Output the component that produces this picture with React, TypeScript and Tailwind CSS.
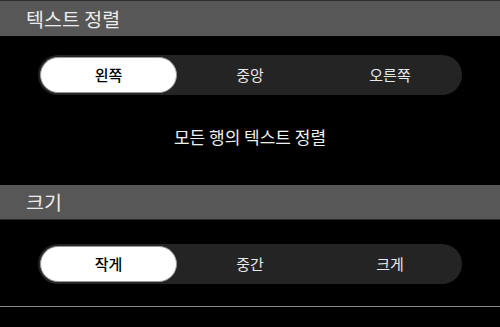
import React, { useState } from "react";

const font = { fontFamily: '"Noto Sans CJK KR", "Noto Sans", sans-serif' };

function Segmented({ options, value, onChange }: { options: string[]; value: number; onChange: (i: number) => void }) {
  return (
    <div className="mx-[38px] h-[40px] rounded-full bg-[#242424] p-[2px] flex">
      {options.map((o, i) => (
        <div key={o} className="flex-1 flex">
          <button
            onClick={() => onChange(i)}
            className={
              i === value
                ? "flex-1 mr-[3px] rounded-full bg-white text-black text-[15px] font-medium border border-[#9a9a9a] flex items-center justify-center"
                : "flex-1 rounded-full text-[#e8e8e8] text-[15px] flex items-center justify-center"
            }
          >
            {o}
          </button>
        </div>
      ))}
    </div>
  );
}

export default function App() {
  const [align, setAlign] = useState(0);
  const [size, setSize] = useState(0);
  return (
    <div className="w-[500px] h-[327px] bg-black overflow-hidden" style={font}>
      <div className="h-[36px] bg-[#575757] border-t border-[#2e2e2e] flex items-center pl-[26px] text-[19.5px] text-[#ececec]">
        텍스트 정렬
      </div>
      <div className="pt-[19px]">
        <Segmented options={["왼쪽", "중앙", "오른쪽"]} value={align} onChange={setAlign} />
      </div>
      <div className="h-[90px] flex items-start justify-center pt-[29px] text-[17px] text-[#f0f0f0]">
        모든 행의 텍스트 정렬
      </div>
      <div className="h-[35px] bg-[#575757] flex items-center pl-[26px] text-[19.5px] text-[#ececec] border-b border-[#2a2a2a]">
        크기
      </div>
      <div className="pt-[24px]">
        <Segmented options={["작게", "중간", "크게"]} value={size} onChange={setSize} />
      </div>
      <div className="mt-[22px] h-px bg-[#8a8a8a]" />
    </div>
  );
}
